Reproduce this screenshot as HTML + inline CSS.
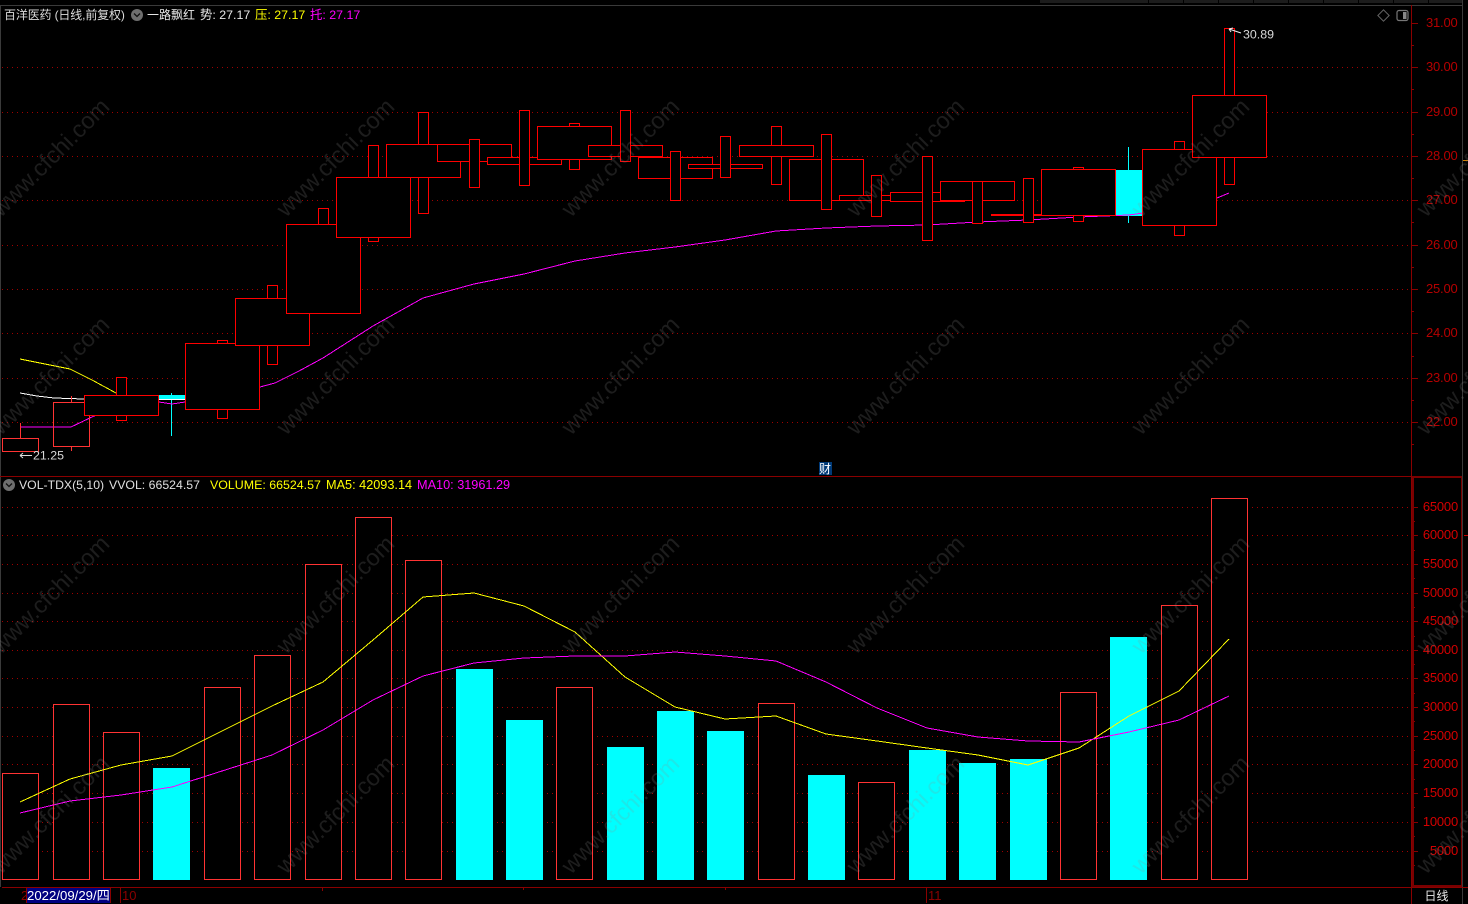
<!DOCTYPE html>
<html><head><meta charset="utf-8"><style>
html,body{margin:0;padding:0;background:#000;width:1468px;height:904px;overflow:hidden}
svg{position:absolute;left:0;top:0;display:block}
text{font-family:"Liberation Sans","Noto Sans CJK SC",sans-serif;font-size:12.4px}
.cj{font-size:12px}
.ax text{font-size:13px;letter-spacing:-.2px}
.up{fill:#b40000}.lo{fill:#d40000}
.g{stroke:#a00000;stroke-width:1;stroke-dasharray:1 4;fill:none;shape-rendering:crispEdges}
.b rect{fill:#000;stroke:#f00;stroke-width:1}
.v rect{fill:#000;stroke:#f33;stroke-width:1}
.c{fill:#0ff}
.l{fill:none;stroke-width:1;shape-rendering:crispEdges}
.wm text{font-size:23.5px;fill:#909090;opacity:.2}
</style></head><body>
<svg width="1468" height="904" viewBox="0 0 1468 904" xmlns="http://www.w3.org/2000/svg">
<rect width="1468" height="904" fill="#000"/>
<!-- top chrome -->
<rect x="1040" y="0" width="422" height="3" fill="#1c1c1c"/>
<path d="M1148.5 0V4M1183.5 0V4M1218.5 0V4M1253.5 0V4M1288.5 0V4M1323.5 0V4M1358.5 0V4M1393.5 0V4M1428.5 0V4" stroke="#000"/>
<path d="M0 5.5H1462M0.5 5V887M1462.5 0V904" stroke="#3a3a3a" fill="none"/>
<!-- upper grid -->
<path class="g" d="M2 67.5H1411M2 112.5H1411M2 156.5H1411M2 200.5H1411M2 245.5H1411M2 289.5H1411M2 333.5H1411M2 378.5H1411M2 422.5H1411"/>
<!-- lower grid -->
<path class="g" d="M2 507.5H1408M2 535.5H1408M2 564.5H1408M2 593.5H1408M2 621.5H1408M2 650.5H1408M2 678.5H1408M2 707.5H1408M2 736.5H1408M2 764.5H1408M2 793.5H1408M2 822.5H1408M2 851.5H1408"/>
<!-- cyan candles -->
<rect class="c" x="159" y="395" width="26" height="5"/>
<rect class="c" x="171" y="393" width="1" height="43"/>
<rect class="c" x="1116" y="170" width="26" height="46"/>
<rect class="c" x="1128" y="147" width="1" height="76"/>
<!-- price MA lines -->
<polyline class="l" stroke="#ff0" points="20,359 70,369 92,380 116,393"/>
<polyline class="l" stroke="#fff" points="20,393 37,396 54,398 84,399"/>
<path class="l" stroke="#fff" d="M159 399.5H185"/>
<polyline class="l" stroke="#f0f" points="20,427 71,427 94,416 120,408 159,402 172,404 185,402 222,395 260,387 275,383 299,371 323,358 373,326 423,298 474,284 524,274 575,261 625,253 675,247 725,240 776,231 826,228 877,226 927,225 978,222 1028,220 1079,217 1129,215 1179,208 1217,198 1229,193"/>
<!-- candles -->
<g class="b" shape-rendering="crispEdges">
<path d="M20.5 423V438M71.5 396V402M71.5 447V451" stroke="#f33"/>
<rect x="2.5" y="438.5" width="36" height="13" style="stroke:#f33;fill:none"/>
<rect x="53.5" y="402.5" width="36" height="44" style="stroke:#f33;fill:none"/>
<rect x="116.5" y="377.5" width="10" height="43"/><rect x="84.5" y="395.5" width="74" height="20"/>
<rect x="217.5" y="340.5" width="10" height="78"/><rect x="185.5" y="343.5" width="74" height="66"/>
<rect x="267.5" y="285.5" width="10" height="79"/><rect x="235.5" y="298.5" width="74" height="47"/>
<rect x="318.5" y="208.5" width="10" height="30"/><rect x="286.5" y="224.5" width="74" height="89"/>
<rect x="368.5" y="145.5" width="10" height="96"/><rect x="336.5" y="177.5" width="74" height="60"/>
<rect x="418.5" y="112.5" width="10" height="101"/><rect x="386.5" y="144.5" width="74" height="33"/>
<rect x="437.5" y="144.5" width="74" height="17"/><rect x="469.5" y="139.5" width="10" height="48"/>
<rect x="487.5" y="157.5" width="74" height="7"/><rect x="519.5" y="110.5" width="10" height="75"/>
<rect x="569.5" y="123.5" width="10" height="46"/><rect x="537.5" y="126.5" width="74" height="33"/>
<rect x="588.5" y="145.5" width="74" height="11"/><rect x="620.5" y="110.5" width="10" height="51"/>
<rect x="638.5" y="157.5" width="74" height="21"/><rect x="670.5" y="151.5" width="10" height="49"/>
<rect x="688.5" y="164.5" width="74" height="4"/><rect x="720.5" y="136.5" width="10" height="41"/>
<rect x="771.5" y="126.5" width="10" height="58"/><rect x="739.5" y="145.5" width="74" height="11"/>
<rect x="789.5" y="159.5" width="74" height="41"/><rect x="821.5" y="134.5" width="10" height="75"/>
<rect x="839.5" y="195.5" width="74" height="5"/><rect x="871.5" y="175.5" width="10" height="41"/>
<rect x="890.5" y="192.5" width="74" height="9"/><rect x="922.5" y="156.5" width="10" height="84"/>
<rect x="940.5" y="181.5" width="74" height="19"/><rect x="972.5" y="181.5" width="10" height="42"/>
<rect x="991.5" y="214.5" width="74" height="1"/><rect x="1023.5" y="178.5" width="10" height="44"/>
<rect x="1073.5" y="167.5" width="10" height="54"/><rect x="1041.5" y="169.5" width="74" height="46"/>
<rect x="1174.5" y="141.5" width="10" height="94"/><rect x="1142.5" y="149.5" width="74" height="76"/>
<rect x="1224.5" y="28.5" width="10" height="156"/><rect x="1192.5" y="95.5" width="74" height="62"/>
</g>
<!-- annotations -->
<path d="M20 455.5H32M20 455.5L23 453M20 455.5L23 458" stroke="#ddd" fill="none"/>
<text x="33" y="459.5" fill="#d8d8d8">21.25</text>
<path d="M1229 29L1241 33M1229 29L1233 28M1229 29L1231 32" stroke="#eee" fill="none"/>
<text x="1243" y="38.5" fill="#d8d8d8">30.89</text>
<!-- volume bars -->
<g class="v" shape-rendering="crispEdges">
<rect x="2.5" y="773.5" width="36" height="106"/>
<rect x="53.5" y="704.5" width="36" height="175"/>
<rect x="103.5" y="732.5" width="36" height="147"/>
<rect x="204.5" y="687.5" width="36" height="192"/>
<rect x="254.5" y="655.5" width="36" height="224"/>
<rect x="305.5" y="564.5" width="36" height="315"/>
<rect x="355.5" y="517.5" width="36" height="362"/>
<rect x="405.5" y="560.5" width="36" height="319"/>
<rect x="556.5" y="687.5" width="36" height="192"/>
<rect x="758.5" y="703.5" width="36" height="176"/>
<rect x="858.5" y="782.5" width="36" height="97"/>
<rect x="1060.5" y="692.5" width="36" height="187"/>
<rect x="1161.5" y="605.5" width="36" height="274"/>
<rect x="1211.5" y="498.5" width="36" height="381"/>
</g>
<g class="c">
<rect x="153" y="768" width="37" height="112"/>
<rect x="456" y="669" width="37" height="211"/>
<rect x="506" y="720" width="37" height="160"/>
<rect x="607" y="747" width="37" height="133"/>
<rect x="657" y="711" width="37" height="169"/>
<rect x="707" y="731" width="37" height="149"/>
<rect x="808" y="775" width="37" height="105"/>
<rect x="909" y="750" width="37" height="130"/>
<rect x="959" y="763" width="37" height="117"/>
<rect x="1010" y="759" width="37" height="121"/>
<rect x="1110" y="637" width="37" height="243"/>
</g>
<polyline class="l" stroke="#ff0" points="20,802 70,779 121,765 172,756 222,731 272,706 323,682 373,640 423,597 474,593 524,606 575,632 625,677 675,707 725,719 776,716 826,734 877,741 927,748 978,755 1028,765 1079,748 1129,716 1179,691 1229,639"/>
<polyline class="l" stroke="#f0f" points="20,813 70,801 121,795 172,787 222,771 272,755 323,730 373,700 423,676 474,663 524,658 575,656 625,656 675,652 725,656 776,661 826,682 877,708 927,728 978,737 1028,741 1079,742 1129,732 1179,720 1229,696"/>
<!-- frame / axes -->
<g shape-rendering="crispEdges" fill="none" stroke="#8a0000">
<path d="M0 476.5H1412"/>
<path d="M1411.5 5V904"/>
<path d="M2 887.5H1468"/>
<path d="M1411 23.5H1418M1411 67.5H1418M1411 112.5H1418M1411 156.5H1418M1411 200.5H1418M1411 245.5H1418M1411 289.5H1418M1411 333.5H1418M1411 378.5H1418M1411 422.5H1418"/>
<path d="M1411 45.5H1414M1411 89.5H1414M1411 134.5H1414M1411 178.5H1414M1411 222.5H1414M1411 267.5H1414M1411 311.5H1414M1411 356.5H1414M1411 400.5H1414M1411 444.5H1414"/>
<path d="M1413 507.5H1418M1413 535.5H1418M1413 564.5H1418M1413 593.5H1418M1413 621.5H1418M1413 650.5H1418M1413 678.5H1418M1413 707.5H1418M1413 736.5H1418M1413 764.5H1418M1413 793.5H1418M1413 822.5H1418M1413 851.5H1418"/>
<path d="M1413 521.5H1415M1413 550.5H1415M1413 578.5H1415M1413 607.5H1415M1413 636.5H1415M1413 664.5H1415M1413 693.5H1415M1413 721.5H1415M1413 750.5H1415M1413 779.5H1415M1413 807.5H1415M1413 836.5H1415M1413 865.5H1415"/>
<path d="M322.5 888V891M523.5 888V890M725.5 888V890"/>
<path d="M26.5 888V903M110.5 888V903M120.5 888V903M926.5 888V903"/>
</g>
<g fill="#7a0000" shape-rendering="crispEdges">
<rect x="1412" y="476" width="50" height="2"/>
<rect x="1412" y="476" width="2" height="411"/>
<rect x="1461" y="476" width="1" height="411"/>
<rect x="1412" y="885" width="50" height="2"/>
</g>
<path d="M1463 160.5H1468" stroke="#d08000" shape-rendering="crispEdges"/>
<path d="M1464 535.5H1468" stroke="#c00000" shape-rendering="crispEdges"/>
<g class="ax up">
<text x="1426" y="27">31.00</text>
<text x="1426" y="71">30.00</text>
<text x="1426" y="116">29.00</text>
<text x="1426" y="160">28.00</text>
<text x="1426" y="204">27.00</text>
<text x="1426" y="249">26.00</text>
<text x="1426" y="293">25.00</text>
<text x="1426" y="337">24.00</text>
<text x="1426" y="382">23.00</text>
<text x="1426" y="426">22.00</text>
</g>
<g class="ax lo" text-anchor="end">
<text x="1458" y="511">65000</text>
<text x="1458" y="539">60000</text>
<text x="1458" y="568">55000</text>
<text x="1458" y="597">50000</text>
<text x="1458" y="625">45000</text>
<text x="1458" y="654">40000</text>
<text x="1458" y="682">35000</text>
<text x="1458" y="711">30000</text>
<text x="1458" y="740">25000</text>
<text x="1458" y="768">20000</text>
<text x="1458" y="797">15000</text>
<text x="1458" y="826">10000</text>
<text x="1458" y="855">5000</text>
</g>
<!-- header texts -->
<text x="4" y="19" fill="#dcdcdc" class="cj" style="letter-spacing:-.15px">百洋医药 (日线,前复权)</text>
<circle cx="137" cy="15" r="6" fill="#6e6e6e"/><path d="M134 13.5L137 16.5L140 13.5" stroke="#111" stroke-width="1.3" fill="none"/>
<text x="147" y="19" fill="#e8e8e8" class="cj">一路飘红</text>
<text x="200" y="19" fill="#e8e8e8">势: 27.17</text>
<text x="255" y="19" fill="#ff0">压: 27.17</text>
<text x="310" y="19" fill="#f0f">托: 27.17</text>
<rect x="1379.5" y="11.5" width="8" height="8" transform="rotate(45 1383.5 15.5)" fill="none" stroke="#666"/>
<rect x="1397" y="10.5" width="11" height="10" rx="2" fill="none" stroke="#777" stroke-width="1.2"/><rect x="1403" y="12" width="3.5" height="7" fill="#888"/>
<circle cx="9" cy="485" r="6" fill="#6e6e6e"/><path d="M6 483.5L9 486.5L12 483.5" stroke="#111" stroke-width="1.3" fill="none"/>
<text x="19" y="489" fill="#e0e0e0" style="font-size:12.25px">VOL-TDX(5,10)</text>
<text x="109" y="489" fill="#e0e0e0" style="font-size:12.3px">VVOL: 66524.57</text>
<text x="210" y="489" fill="#ff0">VOLUME: 66524.57</text>
<text x="326" y="489" fill="#ff0" style="font-size:12.7px">MA5: 42093.14</text>
<text x="417" y="489" fill="#f0f" style="font-size:12.7px">MA10: 31961.29</text>
<rect x="819" y="462" width="13" height="13" fill="#003a78"/>
<text x="819" y="473" fill="#fff" class="cj">财</text>
<!-- bottom -->
<text x="21" y="900" fill="#8a0000" style="font-size:13px">2</text>
<rect x="27" y="888" width="83" height="15" fill="#000080"/>
<text x="27" y="900" fill="#fff" style="font-size:13.2px">2022/09/29/四</text>
<text x="122" y="900" fill="#8a0000" style="font-size:13px">10</text>
<text x="928" y="900" fill="#8a0000" style="font-size:13px">11</text>
<text x="1424.5" y="900" fill="#e8e8e8" class="cj">日线</text>
<!-- watermark -->
<g class="wm">
<text transform="translate(1,218) rotate(-45)">www.cfchi.com</text>
<text transform="translate(286,218) rotate(-45)">www.cfchi.com</text>
<text transform="translate(571,218) rotate(-45)">www.cfchi.com</text>
<text transform="translate(856,218) rotate(-45)">www.cfchi.com</text>
<text transform="translate(1141,218) rotate(-45)">www.cfchi.com</text>
<text transform="translate(1426,218) rotate(-45)">www.cfchi.com</text>
<text transform="translate(1,436) rotate(-45)">www.cfchi.com</text>
<text transform="translate(286,436) rotate(-45)">www.cfchi.com</text>
<text transform="translate(571,436) rotate(-45)">www.cfchi.com</text>
<text transform="translate(856,436) rotate(-45)">www.cfchi.com</text>
<text transform="translate(1141,436) rotate(-45)">www.cfchi.com</text>
<text transform="translate(1426,436) rotate(-45)">www.cfchi.com</text>
<text transform="translate(1,655) rotate(-45)">www.cfchi.com</text>
<text transform="translate(286,655) rotate(-45)">www.cfchi.com</text>
<text transform="translate(571,655) rotate(-45)">www.cfchi.com</text>
<text transform="translate(856,655) rotate(-45)">www.cfchi.com</text>
<text transform="translate(1141,655) rotate(-45)">www.cfchi.com</text>
<text transform="translate(1426,655) rotate(-45)">www.cfchi.com</text>
<text transform="translate(1,875) rotate(-45)">www.cfchi.com</text>
<text transform="translate(286,875) rotate(-45)">www.cfchi.com</text>
<text transform="translate(571,875) rotate(-45)">www.cfchi.com</text>
<text transform="translate(856,875) rotate(-45)">www.cfchi.com</text>
<text transform="translate(1141,875) rotate(-45)">www.cfchi.com</text>
<text transform="translate(1426,875) rotate(-45)">www.cfchi.com</text>
</g>
</svg>
</body></html>
